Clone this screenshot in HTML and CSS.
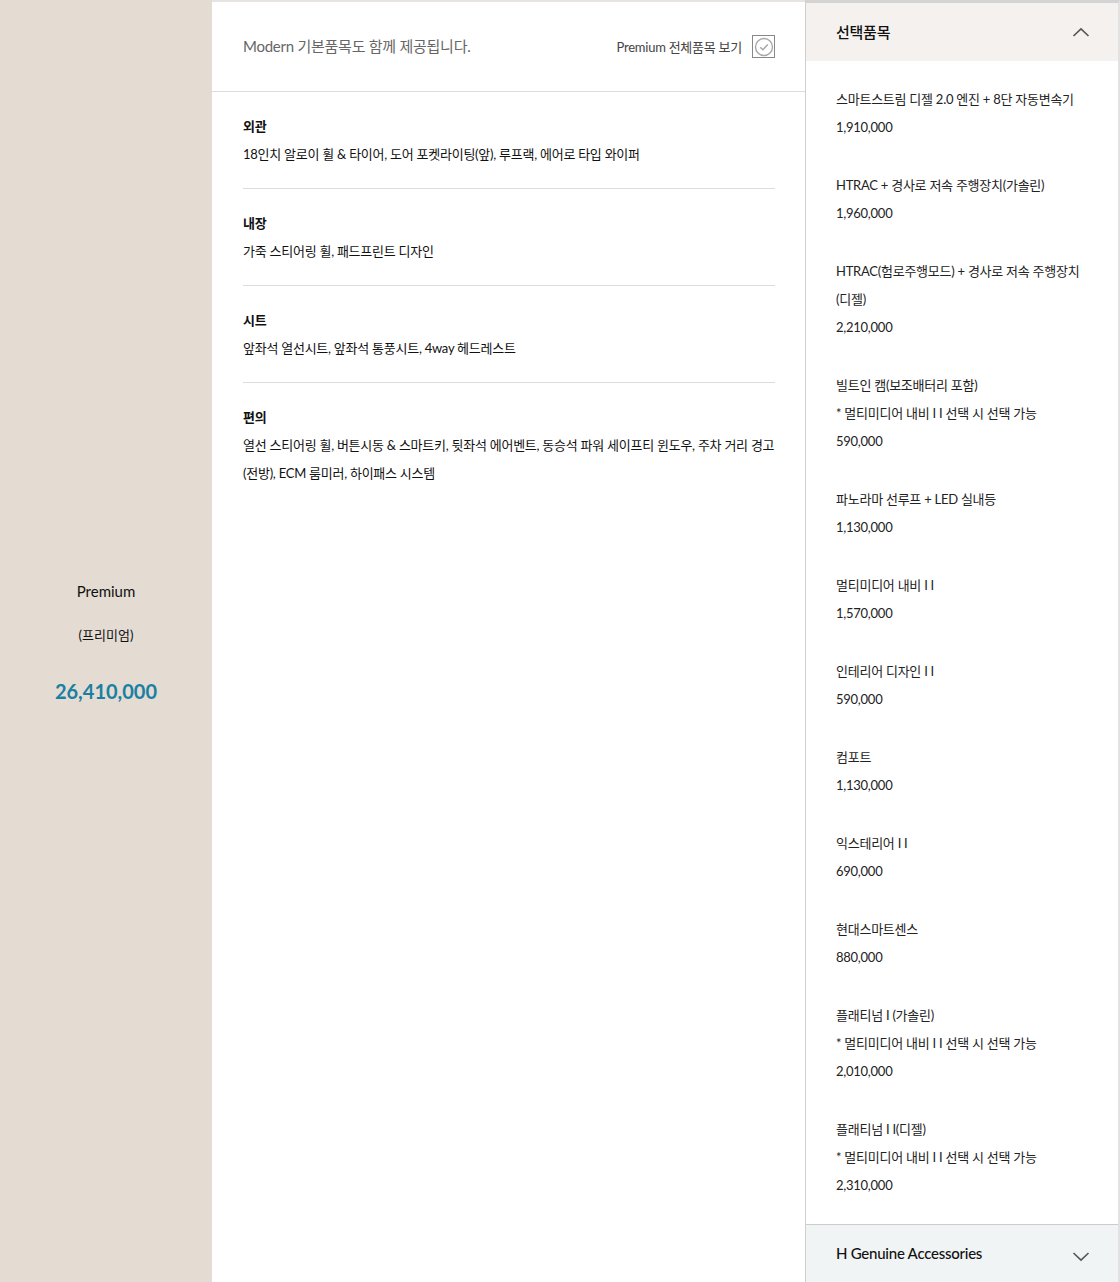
FILE: index.html
```html
<!DOCTYPE html>
<html lang="ko">
<head>
    <meta charset="UTF-8" />
    <meta name="viewport" content="width=device-width, initial-scale=1.0" />
    <title>Premium 기본품목</title>
    <link rel="stylesheet" href="styles.css">
</head>
<body>
    <div class="layout">
        <aside class="trim">
            <p class="trim-name">Premium</p>
            <p class="trim-sub">(프리미엄)</p>
            <p class="trim-price">26,410,000</p>
        </aside>

        <main class="basic">
            <div class="basic-head">
                <p class="basic-note">Modern 기본품목도 함께 제공됩니다.</p>
                <label class="view-all">
                    <span>Premium 전체품목 보기</span>
                    <span class="check-box">
                        <svg width="20" height="20" viewBox="0 0 20 20">
                            <circle cx="10" cy="10" r="8.5" fill="none" stroke="#a8a8a8" stroke-width="1.4"/>
                            <path d="M6.2 10.2 L8.9 12.8 L13.8 7.6" fill="none" stroke="#a8a8a8" stroke-width="1.5"/>
                        </svg>
                    </span>
                </label>
            </div>

            <section class="spec">
                <h3>외관</h3>
                <p>18인치 알로이 휠 &amp; 타이어, 도어 포켓라이팅(앞), 루프랙, 에어로 타입 와이퍼</p>
            </section>
            <section class="spec">
                <h3>내장</h3>
                <p>가죽 스티어링 휠, 패드프린트 디자인</p>
            </section>
            <section class="spec">
                <h3>시트</h3>
                <p>앞좌석 열선시트, 앞좌석 통풍시트, 4way 헤드레스트</p>
            </section>
            <section class="spec last">
                <h3>편의</h3>
                <p>열선 스티어링 휠, 버튼시동 &amp; 스마트키, 뒷좌석 에어벤트, 동승석 파워 세이프티 윈도우, 주차 거리 경고(전방), ECM 룸미러, 하이패스 시스템</p>
            </section>
        </main>

        <aside class="options">
            <div class="panel-head">
                <h2>선택품목</h2>
                <svg class="chevron" width="18" height="10" viewBox="0 0 18 10">
                    <path d="M1.5 9 L9 1.8 L16.5 9" fill="none" stroke="#555" stroke-width="1.6"/>
                </svg>
            </div>
            <ul class="option-list">
                <li><p>스마트스트림 디젤 2.0 엔진 + 8단 자동변속기</p><p>1,910,000</p></li>
                <li><p>HTRAC + 경사로 저속 주행장치(가솔린)</p><p>1,960,000</p></li>
                <li><p>HTRAC(험로주행모드) + 경사로 저속 주행장치(디젤)</p><p>2,210,000</p></li>
                <li><p>빌트인 캠(보조배터리 포함)</p><p>* 멀티미디어 내비 I I 선택 시 선택 가능</p><p>590,000</p></li>
                <li><p>파노라마 선루프 + LED 실내등</p><p>1,130,000</p></li>
                <li><p>멀티미디어 내비 I I</p><p>1,570,000</p></li>
                <li><p>인테리어 디자인 I I</p><p>590,000</p></li>
                <li><p>컴포트</p><p>1,130,000</p></li>
                <li><p>익스테리어 I I</p><p>690,000</p></li>
                <li><p>현대스마트센스</p><p>880,000</p></li>
                <li><p>플래티넘 I (가솔린)</p><p>* 멀티미디어 내비 I I 선택 시 선택 가능</p><p>2,010,000</p></li>
                <li><p>플래티넘 I I(디젤)</p><p>* 멀티미디어 내비 I I 선택 시 선택 가능</p><p>2,310,000</p></li>
            </ul>
            <div class="panel-head accessories">
                <h2>H Genuine Accessories</h2>
                <svg class="chevron" width="18" height="10" viewBox="0 0 18 10">
                    <path d="M1.5 1 L9 8.2 L16.5 1" fill="none" stroke="#555" stroke-width="1.6"/>
                </svg>
            </div>
        </aside>
    </div>
</body>
</html>
```

FILE: styles.css
```css
:root {
    --beige: #e4dbd2;
    --line: #dcdcdc;
    --text: #111111;
    --text-muted: #666666;
    --accent: #1a7fa3;
    --head-bg: #f5f1ef;
    --acc-bg: #f1f4f5;
}

* {
    margin: 0;
    padding: 0;
    box-sizing: border-box;
}

body {
    font-family: 'Lato', 'Noto Sans CJK KR', sans-serif;
    color: var(--text);
    font-size: 13px;
    line-height: 28px;
    letter-spacing: -0.25px;
    background: #ffffff;
}

.layout {
    display: flex;
    height: 1282px;
    overflow: hidden;
}

/* trim column */
.trim {
    width: 212px;
    flex-shrink: 0;
    background: var(--beige);
    display: flex;
    flex-direction: column;
    justify-content: center;
    align-items: center;
    text-align: center;
    letter-spacing: 0;
}

.trim-name {
    font-size: 15px;
    line-height: 28px;
}

.trim-sub {
    font-size: 13px;
    margin-top: 16px;
}

.trim-price {
    font-size: 20px;
    font-weight: 700;
    color: var(--accent);
    margin-top: 28px;
}

/* basic items */
.basic {
    flex: 1;
    border-top: 2px solid #e6e3e0;
}

.basic-head {
    height: 90px;
    display: flex;
    align-items: center;
    justify-content: space-between;
    padding: 0 30px 0 31px;
    border-bottom: 1px solid var(--line);
}

.basic-note {
    font-size: 15px;
    color: var(--text-muted);
    margin-top: -2px;
}

.view-all {
    display: flex;
    align-items: center;
    gap: 10px;
    color: #444444;
    font-size: 13px;
}

.check-box {
    width: 23px;
    height: 23px;
    border: 1px solid #888888;
    display: flex;
    align-items: center;
    justify-content: center;
}

.spec {
    margin: 0 30px 0 31px;
    padding: 20px 0 20px;
    border-bottom: 1px solid var(--line);
}

.spec.last {
    border-bottom: none;
}

.spec h3 {
    font-size: 13px;
    font-weight: 700;
}

/* option panel */
.options {
    width: 315px;
    flex-shrink: 0;
    border-left: 1px solid #cfcfcf;
    border-right: 2px solid #e2e2e2;
    border-top: 3px solid #d4d4d4;
    display: flex;
    flex-direction: column;
}

.panel-head {
    height: 58px;
    flex-shrink: 0;
    background: var(--head-bg);
    display: flex;
    align-items: center;
    justify-content: space-between;
    padding: 0 28px 0 30px;
}

.panel-head h2 {
    font-size: 15px;
    font-weight: 500;
}

.option-list {
    list-style: none;
    padding: 24px 30px 25px;
}

.option-list li + li {
    margin-top: 30px;
}

.option-list p {
    color: #222222;
}

.accessories {
    background: var(--acc-bg);
    border-top: 1px solid #cccccc;
    height: 60px;
}

.accessories h2 {
    margin-top: -4px;
}

.accessories .chevron {
    margin-top: 4px;
}
```
